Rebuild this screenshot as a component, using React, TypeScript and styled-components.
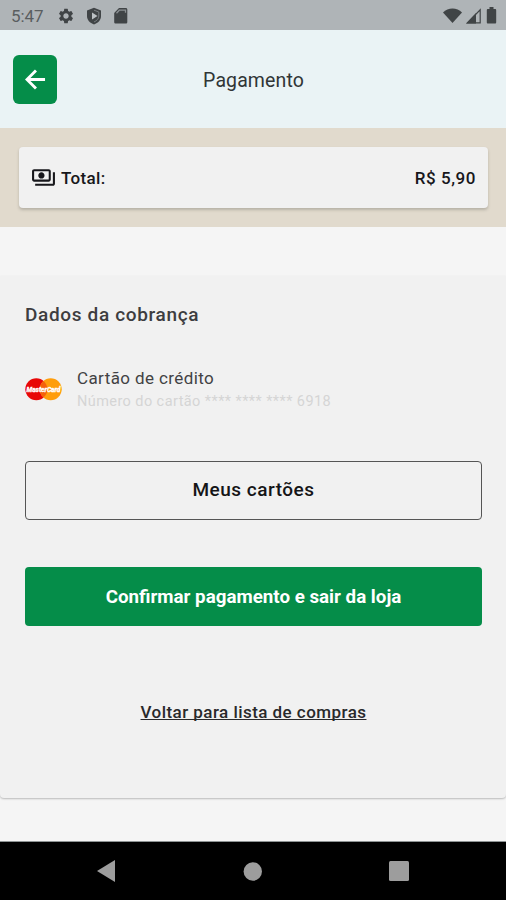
import React from "react";
import styled, { createGlobalStyle } from "styled-components";
import { MdOutlinePayments, MdSettings } from "react-icons/md";

const GlobalStyle = createGlobalStyle`
  * { box-sizing: border-box; }
  body { margin: 0; background: #f5f5f5; font-family: Roboto, "Liberation Sans", sans-serif; }
  button { font-family: inherit; padding: 0; cursor: pointer; }
`;

const Screen = styled.div`
  display: flex;
  flex-direction: column;
  width: 506px;
  height: 900px;
  overflow: hidden;
  background: #f5f5f5;
`;

const StatusBar = styled.div`
  display: flex;
  flex: none;
  align-items: center;
  justify-content: space-between;
  height: 30px;
  padding: 1px 9px 0 11px;
  background: #afb4b7;
  color: #404446;
`;

const StatusGroup = styled.div<{ $gap: number }>`
  display: flex;
  align-items: center;
  gap: ${(p) => p.$gap}px;
  svg { display: block; }
`;

const Clock = styled.span`
  width: 36px;
  color: #5a5e60;
  font-size: 17px;
  letter-spacing: -0.1px;
  line-height: 20px;
  white-space: nowrap;
`;

const Header = styled.header`
  display: grid;
  flex: none;
  grid-template-columns: 44px 1fr 44px;
  align-items: center;
  height: 98px;
  padding: 0 12px 0 13px;
  background: #eaf3f5;
`;

const BackButton = styled.button`
  display: flex;
  align-items: center;
  justify-content: center;
  width: 44px;
  height: 49px;
  border: 0;
  border-radius: 6px;
  background: #058d49;
  color: #fff;
`;

const Title = styled.h1`
  margin: 3px 0 0;
  color: #303536;
  font-size: 19.5px;
  font-weight: 400;
  letter-spacing: 0.1px;
  line-height: 24px;
  text-align: center;
`;

const TotalBand = styled.section`
  flex: none;
  height: 99px;
  padding: 19px 18px 18px 19px;
  background: #e1dacd;
`;

const TotalCard = styled.div`
  display: flex;
  align-items: center;
  height: 61px;
  padding: 0 12px;
  border-radius: 4px;
  background: #f1f1f1;
  box-shadow: 0 2px 3px rgba(60, 60, 50, 0.25);
  color: #17171b;
`;

const TotalLabel = styled.span`
  margin-left: 5px;
  font-size: 17px;
  font-weight: 500;
  letter-spacing: 0.35px;
`;

const TotalValue = styled.span`
  margin-left: auto;
  font-size: 17px;
  font-weight: 500;
  letter-spacing: 0.55px;
`;

const Panel = styled.main`
  display: flex;
  flex: none;
  flex-direction: column;
  height: 522px;
  margin-top: 49px;
  padding: 26px 24px 0 25px;
  border-radius: 0 0 4px 4px;
  background: #f1f1f1;
  box-shadow: 0 1px 2px rgba(0, 0, 0, 0.24);
`;

const SectionTitle = styled.h2`
  margin: 0;
  color: #3d3d3f;
  font-size: 19px;
  font-weight: 500;
  letter-spacing: 0.65px;
  line-height: 26px;
`;

const CardRow = styled.div`
  display: flex;
  align-items: center;
  gap: 15px;
  height: 46px;
  margin-top: 38px;
`;

const CardDetails = styled.div`
  padding-top: 2px;
`;

const CardName = styled.div`
  color: #424244;
  font-size: 17px;
  letter-spacing: 0.4px;
  line-height: 23px;
`;

const CardNumber = styled.div`
  padding-top: 1px;
  color: #d5d5d5;
  font-size: 14.5px;
  letter-spacing: 0.42px;
  line-height: 22px;
  white-space: nowrap;
`;

const ActionButton = styled.button<{ $primary?: boolean }>`
  flex: none;
  height: 59px;
  margin-top: ${(p) => (p.$primary ? 47 : 49)}px;
  border: ${(p) => (p.$primary ? "0" : "1px solid #555")};
  border-radius: 4px;
  background: ${(p) => (p.$primary ? "#058d49" : "transparent")};
  color: ${(p) => (p.$primary ? "#fff" : "#151517")};
  font-size: ${(p) => (p.$primary ? 18.75 : 19)}px;
  font-weight: ${(p) => (p.$primary ? 700 : 500)};
  letter-spacing: ${(p) => (p.$primary ? 0 : 0.5)}px;
  padding-bottom: ${(p) => (p.$primary ? 0 : 2)}px;
`;

const BackLink = styled.a`
  align-self: center;
  margin-top: 75px;
  color: #29292b;
  font-size: 17px;
  font-weight: 500;
  letter-spacing: 0.45px;
  line-height: 22px;
  text-decoration: underline;
  text-decoration-thickness: 1px;
  text-decoration-skip-ink: none;
  text-underline-offset: 1px;
`;

const NavBar = styled.nav`
  display: flex;
  flex: none;
  align-items: center;
  justify-content: space-between;
  height: 59px;
  margin-top: auto;
  padding: 0 97px;
  border-top: 1px solid #8f9495;
  background: #000;
  svg { display: block; }
`;

const ShieldIcon = () => (
  <svg width="18" height="18" viewBox="0 0 18 18">
    <path fill="currentColor" d="M9 .8 16 3.500V9c0 4-2.800 7-7 8.500C4.800 16 2 13 2 9V3.500z" />
    <path fill="none" stroke="#777c7f" strokeWidth="1" d="M9 3.200 13.800 5v4c0 2.600-1.900 4.700-4.800 6" />
    <path fill="#bcc1c4" d="m7 5.600 5.500 3.400L7 12.400z" />
  </svg>
);

const SdCardIcon = () => (
  <svg width="18" height="18" viewBox="0 0 18 18">
    <path fill="currentColor" d="M6 1h6.700c1 0 1.600.6 1.600 1.600v12.300c0 1-.6 1.600-1.600 1.600H2.800c-1 0-1.600-.6-1.600-1.600V6z" />
    <path fill="none" stroke="#8b9093" strokeWidth="1.300" d="M3.500 6.300 6.300 3.200h6.200v2.500" />
  </svg>
);

const WifiIcon = () => (
  <svg width="19" height="16" viewBox="0 0 19 16">
    <path fill="currentColor" d="M0 4.500C5-.8 14-.8 19 4.500L9.500 15z" />
  </svg>
);

const SignalIcon = () => (
  <svg width="16" height="16" viewBox="0 0 16 16">
    <path fill="currentColor" d="M0 15.500 10 5v10.500z" />
    <path fill="none" stroke="currentColor" strokeWidth="1.200" d="M1.500 14.800 14.200 1.800v13z" />
  </svg>
);

const BatteryIcon = () => (
  <svg width="11" height="17" viewBox="0 0 11 17">
    <path fill="currentColor" d="M3.500 0h4v2H9c.8 0 1.200.5 1.200 1.200v12c0 .8-.4 1.300-1.200 1.300H2c-.8 0-1.200-.5-1.200-1.300v-12C.8 2.500 1.200 2 2 2h1.500z" />
  </svg>
);

const ArrowIcon = () => (
  <svg width="21" height="21" viewBox="0 0 22 22">
    <path d="M11.500 1.500 2 11l9.500 9.500M2 11h19" fill="none" stroke="currentColor" strokeWidth="3" />
  </svg>
);

const MastercardLogo = () => (
  <svg width="37" height="23" viewBox="0 0 37 23">
    <circle cx="11.300" cy="11.200" r="11" fill="#e80707" />
    <circle cx="25.700" cy="11.200" r="11" fill="#ff9d0b" />
    <path d="M18.500 2.900a11 11 0 0 1 0 16.600 11 11 0 0 1 0-16.600z" fill="#f5610b" />
    <text
      x="1.500" y="13.800" textLength="34" lengthAdjust="spacingAndGlyphs"
      fill="#fff" stroke="#fff" strokeWidth=".4"
      fontFamily="Roboto, sans-serif" fontSize="7" fontWeight="700" fontStyle="italic"
    >MasterCard</text>
  </svg>
);

export default function App() {
  return (
    <>
      <GlobalStyle />
      <Screen>
        <StatusBar>
          <StatusGroup $gap={10}>
            <Clock>5:47</Clock>
            <MdSettings size={18} />
            <ShieldIcon />
            <SdCardIcon />
          </StatusGroup>
          <StatusGroup $gap={4}>
            <WifiIcon />
            <SignalIcon />
            <BatteryIcon />
          </StatusGroup>
        </StatusBar>
        <Header>
          <BackButton aria-label="Voltar">
            <ArrowIcon />
          </BackButton>
          <Title>Pagamento</Title>
        </Header>
        <TotalBand>
          <TotalCard>
            <MdOutlinePayments size={25} />
            <TotalLabel>Total:</TotalLabel>
            <TotalValue>R$ 5,90</TotalValue>
          </TotalCard>
        </TotalBand>
        <Panel>
          <SectionTitle>Dados da cobrança</SectionTitle>
          <CardRow>
            <MastercardLogo />
            <CardDetails>
              <CardName>Cartão de crédito</CardName>
              <CardNumber>Número do cartão **** **** **** 6918</CardNumber>
            </CardDetails>
          </CardRow>
          <ActionButton>Meus cartões</ActionButton>
          <ActionButton $primary>Confirmar pagamento e sair da loja</ActionButton>
          <BackLink>Voltar para lista de compras</BackLink>
        </Panel>
        <NavBar>
          <svg width="19" height="22" viewBox="0 0 19 22"><path d="M0 11 18 0v22z" fill="#9d9d9d" /></svg>
          <svg width="19" height="19" viewBox="0 0 19 19"><circle cx="9.800" cy="9.500" r="9.200" fill="#9d9d9d" /></svg>
          <svg width="20" height="20" viewBox="0 0 20 20"><rect width="20" height="20" rx="1.500" fill="#9d9d9d" /></svg>
        </NavBar>
      </Screen>
    </>
  );
}
